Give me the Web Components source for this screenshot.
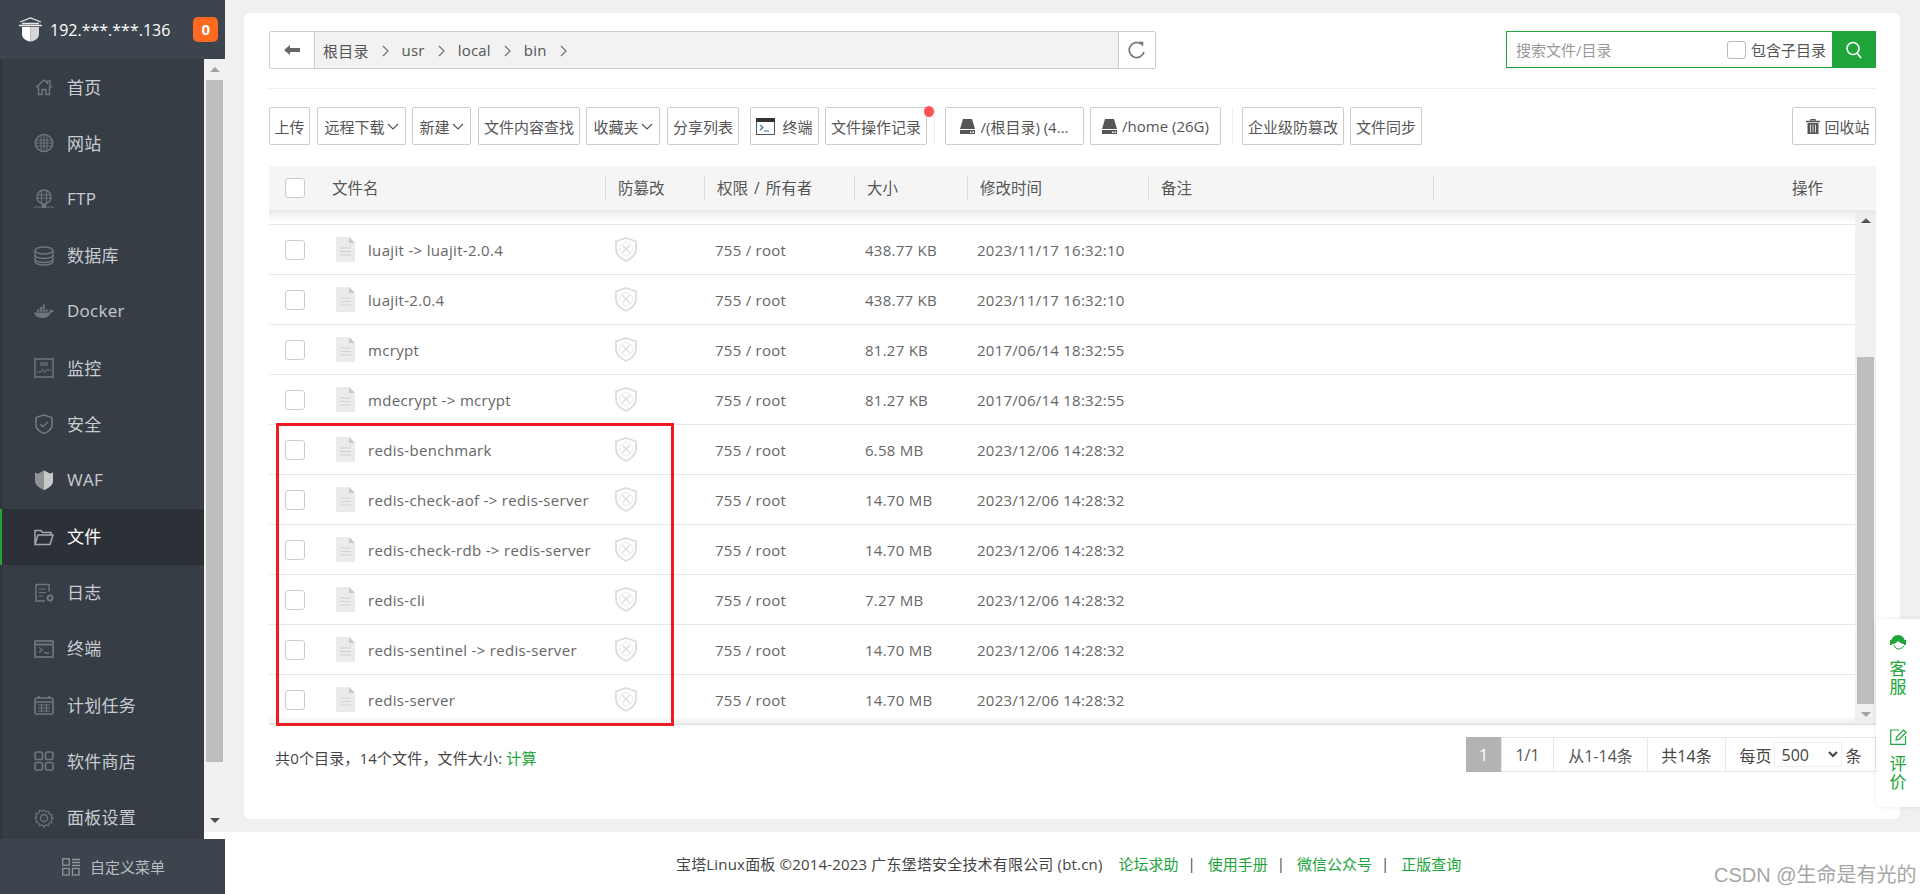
<!DOCTYPE html>
<html lang="zh">
<head>
<meta charset="utf-8">
<title>文件管理</title>
<style>
  html, body { margin: 0; height: 100%; overflow: hidden; }
  body { font-family: "Open Sans", "Noto Sans CJK SC", sans-serif; color: #555; background: #fff; }
</style>
</head>
<body>
<bt-app></bt-app>

<script>
const icons = {
  home: '<path d="M2 10.500 10 3l3.500 3.200V4h2.500v4.600l2 1.900M4.500 9v8.500h3.600v-5h3.800v5h3.600V9" fill="none" stroke="currentColor" stroke-width="1.500"/>',
  globe: '<circle cx="10" cy="10" r="8.600" fill="none" stroke="currentColor" stroke-width="1.500"/><path d="M1.500 7h17M1.500 10h17M1.500 13h17M7 2v16M10 1.500v17M13 2v16" stroke="currentColor" stroke-width="1" fill="none"/>',
  ftp: '<circle cx="10" cy="8" r="7" fill="none" stroke="currentColor" stroke-width="1.500"/><path d="M3.500 6h13M3.500 9h13M7.500 1.500v13M12.500 1.500v13M0 18h20" stroke="currentColor" stroke-width="1.200" fill="none"/><rect x="8" y="15" width="4" height="4" fill="currentColor"/>',
  db: '<path d="M1 4.500C1 2.500 5 1 10 1s9 1.500 9 3.500v11c0 2-4 3.500-9 3.500s-9-1.500-9-3.500z" fill="none" stroke="currentColor" stroke-width="1.500"/><path d="M1 4.500c0 2 4 3.500 9 3.500s9-1.500 9-3.500M1 9c0 2 4 3.500 9 3.500S19 11 19 9M1 13c0 2 4 3.500 9 3.500s9-1.500 9-3.500" fill="none" stroke="currentColor" stroke-width="1.500"/>',
  docker: '<path d="M0 10.500h15c.8-.8 1-2.300.6-3.500 1 .2 1.700.7 2 1.500.8-.3 1.600-.3 2.400 0-.6 1.500-1.700 2-3 2-1.300 3.500-4 5.500-8 5.500-4.500 0-8-1.500-9-5.500z" fill="currentColor"/><path d="M3 7.500h2.200v2.200H3zM5.800 7.500H8v2.200H5.800zM8.600 7.500h2.200v2.200H8.600zM11.400 7.500h2.200v2.200h-2.200zM5.800 5h2.200v2.200H5.800zM8.600 5h2.200v2.200H8.600zM8.600 2.500h2.200v2.200H8.600z" fill="currentColor"/>',
  monitor: '<rect x="1" y="1" width="18" height="18" fill="none" stroke="currentColor" stroke-width="1.500"/><path d="M3 14h4l1.500-3 2 4 1.500-3h5" fill="none" stroke="currentColor" stroke-width="1"/><rect x="6" y="4" width="8" height="4" fill="currentColor" opacity=".6"/>',
  safe: '<path d="M10 1 18 3.500V11c0 4-3.500 6.800-8 8.500C5.500 17.800 2 15 2 11V3.500z" fill="none" stroke="currentColor" stroke-width="1.700"/><path d="M6.300 10 9 12.700l4.800-4.700" fill="none" stroke="currentColor" stroke-width="1.500"/>',
  waf: '<path d="M1 2.500 4 3.700 7 2l3-1.500L13 2l3 1.700 3-1.200V11c0 4-4 7-9 9-5-2-9-5-9-9z" fill="#8f9396"/><path d="M10 .5 13 2l3 1.700 3-1.200V11c0 4-4 7-9 9z" fill="#c6c8ca"/>',
  folder: '<path d="M1 17.500V3.500h6l1.500 2H17v2.500M1 17.500 4 8h15l-3 9.500z" fill="none" stroke="currentColor" stroke-width="1.500"/>',
  log: '<path d="M15 9V2H2v16.500h9" fill="none" stroke="currentColor" stroke-width="1.500" transform="translate(0 -.5)"/><path d="M5 6h7M5 9.500h7M5 13h4" stroke="currentColor" stroke-width="1.200"/><circle cx="16" cy="15" r="2.500" fill="none" stroke="currentColor" stroke-width="2"/>',
  term: '<rect x="1" y="2" width="18" height="16" fill="none" stroke="currentColor" stroke-width="1.700"/><path d="M1 5.500h18" stroke="currentColor" stroke-width="2"/><path d="m5 8.500 3.500 2.500L5 13.500M10 14h5" fill="none" stroke="currentColor" stroke-width="1.300"/>',
  cal: '<rect x="1" y="3" width="18" height="16" rx="2" fill="none" stroke="currentColor" stroke-width="1.700"/><path d="M5 1v3M15 1v3M1 7h18" stroke="currentColor" stroke-width="1.700"/><path d="M4 10h12M4 13h12M4 16h12M7.500 9v8M12.500 9v8" stroke="currentColor" stroke-width="1.100"/>',
  apps: '<rect x="1" y="1" width="7.500" height="7.500" rx="2" fill="none" stroke="currentColor" stroke-width="1.700"/><rect x="11.500" y="1" width="7.500" height="7.500" rx="2" fill="none" stroke="currentColor" stroke-width="1.700"/><rect x="1" y="11.500" width="7.500" height="7.500" rx="2" fill="none" stroke="currentColor" stroke-width="1.700"/><rect x="11.500" y="11.500" width="7.500" height="7.500" rx="2" fill="none" stroke="currentColor" stroke-width="1.700"/>',
  gear: '<path d="m10 1 2 2.300 3-.6.9 2.900 2.900.9-.6 3L20 10l-1.800 1.500.6 3-2.900.9-.9 2.900-3-.6L10 20l-2-2.300-3 .6-.9-2.900-2.900-.9.6-3L0 10l1.800-1.500-.6-3 2.900-.9.9-2.900 3 .6z" fill="none" stroke="currentColor" stroke-width="1.300" transform="translate(1 1) scale(.9)"/><circle cx="10" cy="10" r="3.500" fill="none" stroke="currentColor" stroke-width="1.300"/>'
};

const menu = [
  ['home', '首页'], ['globe', '网站'], ['ftp', 'FTP'], ['db', '数据库'], ['docker', 'Docker'],
  ['monitor', '监控'], ['safe', '安全'], ['waf', 'WAF'], ['folder', '文件', true], ['log', '日志'],
  ['term', '终端'], ['cal', '计划任务'], ['apps', '软件商店'], ['gear', '面板设置']
];

class BtNavItem extends HTMLElement {
  constructor() {
    super();
    this.attachShadow({ mode: 'open' });
    this.shadowRoot.innerHTML = `
    <style>
      :host { display: flex; align-items: center; height: 56.2px; box-sizing: border-box; flex: none;
        border-left: 2px solid #2f353b; padding: 0 0 2px 32px; gap: 13px; font-size: 17px; letter-spacing: .25px; color: #c6ccd2; }
      :host([active]) { background: #2c3138; border-left-color: #20a53a; color: #fff; }
      .icon { width: 20px; height: 20px; color: #6f757a; display: flex; margin-top: 2px; }
      :host([active]) .icon { color: #a5a8ab; }
    </style>
    <span class="icon"><slot name="icon"></slot></span>
    <slot></slot>`;
  }
}
customElements.define('bt-nav-item', BtNavItem);

class BtSidebar extends HTMLElement {
  constructor() {
    super();
    this.attachShadow({ mode: 'open' });
    const items = menu.map(m => `<bt-nav-item ${m[2] ? 'active' : ''}><svg slot="icon" width="20" height="20" viewBox="0 0 20 20">${icons[m[0]]}</svg>${m[1]}</bt-nav-item>`).join('');
    this.shadowRoot.innerHTML = `
    <style>
      :host { display: flex; flex-direction: column; width: 225px; height: 894px; flex: none; background: #fff; }
      .top { height: 59px; background: #3c444d; display: flex; align-items: center; padding-left: 19px; flex: none; color: #fff; font-size: 16px; }
      .top svg { margin-right: 8px; }
      .badge { width: 25px; height: 25px; margin-left: 23px; background: #ff6a20; border-radius: 5px; text-align: center; font-weight: 700; font-size: 15px; line-height: 25px; }
      .mid { display: flex; height: 780px; flex: none; }
      .menu { width: 204px; background: #363d45; display: flex; flex-direction: column; overflow: hidden; flex: none; }
      .bar { width: 21px; height: 773px; background: #f1f1f1; display: flex; flex-direction: column; align-items: center; flex: none; }
      .arrow { height: 21px; display: flex; align-items: center; justify-content: center; flex: none; }
      .up { width: 0; height: 0; border: 5px solid transparent; border-top: 0; border-bottom: 5px solid #a3a3a3; }
      .down { width: 0; height: 0; border: 5px solid transparent; border-bottom: 0; border-top: 5px solid #505050; }
      .thumb { width: 17px; height: 682px; background: #bebebe; flex: none; }
      .gap { flex: 1; }
      .bottom { height: 55px; background: #3c444d; display: flex; align-items: center; padding-left: 62px; gap: 10px; color: #b6bcc2; font-size: 15px; flex: none; }
    </style>
    <div class="top">
      <svg width="23" height="25" viewBox="0 0 23 25">
        <path d="M1 5 11.500 1 22 5M0 8.500h23M3 6.500h17" fill="none" stroke="#e8e8e8" stroke-width="1.300"/>
        <path d="M3 10h8.500v14.500C7 24 3 21.500 3 17z" fill="#fff"/>
        <path d="M20 10h-8.500v14.500C16 24 20 21.500 20 17z" fill="#d5d7d9"/>
      </svg>
      <span>192.***.***.136</span>
      <span class="badge">0</span>
    </div>
    <div class="mid">
      <div class="menu">${items}</div>
      <div class="bar">
        <div class="arrow"><span class="up"></span></div>
        <div class="thumb"></div>
        <div class="gap"></div>
        <div class="arrow" style="height:23px"><span class="down"></span></div>
      </div>
    </div>
    <div class="bottom">
      <svg width="18" height="18" viewBox="0 0 18 18" fill="none" stroke="#8f959a" stroke-width="1.300">
        <rect x=".7" y=".7" width="6.500" height="6.500"/><rect x=".7" y="10.500" width="6.500" height="6.500"/><rect x="10.500" y="10.500" width="6.500" height="6.500"/>
        <path d="M10 1.500h8M10 4.500h8M10 7.500h8"/>
      </svg>
      <span>自定义菜单</span>
    </div>`;
  }
}
customElements.define('bt-sidebar', BtSidebar);

class BtPathbar extends HTMLElement {
  constructor() {
    super();
    this.attachShadow({ mode: 'open' });
    const crumbs = ['根目录', 'usr', 'local', 'bin'].map(c => `<span>${c}</span><svg class="sep" width="7" height="12" viewBox="0 0 7 12"><path d="m1 1 5 5-5 5" fill="none" stroke="#777" stroke-width="1.300"/></svg>`).join('');
    this.shadowRoot.innerHTML = `
    <style>
      :host { display: flex; justify-content: space-between; height: 38px; flex: none; }
      .path { width: 887px; display: flex; border: 1px solid #ccc; border-radius: 2px; box-sizing: border-box; }
      .btn { display: flex; align-items: center; justify-content: center; background: #fff; flex: none; }
      .back { width: 45px; border-right: 1px solid #ccc; box-sizing: border-box; }
      .refresh { width: 37px; border-left: 1px solid #ccc; box-sizing: border-box; }
      .crumbs { flex: 1; background: #f2f2f2; display: flex; align-items: center; padding-left: 8px; font-size: 15px; letter-spacing: .2px; color: #555; }
      .sep { margin: 2px 13px 0 13px; }
      .search { width: 370px; box-sizing: border-box; height: 37px; border: 1px solid #20a53a; display: flex; align-items: center; }
      .ph { font-size: 15px; color: #999; margin-left: 9px; flex: 1; }
      .cb { width: 19px; height: 18px; box-sizing: border-box; border: 1px solid #bbb; border-radius: 3px; margin-right: 5px; }
      .sub { font-size: 15px; color: #555; margin-right: 6px; }
      .go { width: 44px; height: 37px; margin: 0 -1px 0 0; background: #20a53a; display: flex; align-items: center; justify-content: center; flex: none; }
    </style>
    <div class="path">
      <div class="btn back"><svg width="16" height="10" viewBox="0 0 16 10"><path d="M6 0v3h10v4H6v3L0 5z" fill="#666"/></svg></div>
      <div class="crumbs">${crumbs}</div>
      <div class="btn refresh"><svg width="18" height="18" viewBox="0 0 18 18"><path d="M13.500 3.200A7.500 7.500 0 1 0 16 11" fill="none" stroke="#777" stroke-width="1.700"/><path d="M11 .5 15.500 1l-.6 4.800z" fill="#777"/></svg></div>
    </div>
    <div class="search">
      <span class="ph">搜索文件/目录</span>
      <span class="cb"></span>
      <span class="sub">包含子目录</span>
      <div class="go"><svg width="18" height="18" viewBox="0 0 18 18"><circle cx="8" cy="7.500" r="6" fill="none" stroke="#fff" stroke-width="1.700"/><path d="m12 12 4 5" stroke="#fff" stroke-width="1.700"/></svg></div>
    </div>`;
  }
}
customElements.define('bt-pathbar', BtPathbar);

class BtButton extends HTMLElement {
  constructor() {
    super();
    this.attachShadow({ mode: 'open' });
    this.shadowRoot.innerHTML = `
    <style>
      :host { display: flex; align-items: center; justify-content: center; gap: 6px; box-sizing: border-box; height: 38px; flex: none;
        border: 1px solid #ccc; border-radius: 2px; background: #fff; font-size: 15px; color: #555; white-space: nowrap; position: relative; }
      :host([dot])::after { content: ""; position: absolute; right: -8px; top: -2px; width: 10px; height: 11px; border-radius: 50%; background: #ff5252; }
    </style>
    <slot></slot>`;
  }
}
customElements.define('bt-button', BtButton);

class BtToolbar extends HTMLElement {
  constructor() {
    super();
    this.attachShadow({ mode: 'open' });
    const chev = '<svg width="12" height="7" viewBox="0 0 12 7" style="margin-left:-4px"><path d="m1 1 5 5 5-5" fill="none" stroke="#555" stroke-width="1.200"/></svg>';
    const disk = '<svg width="15" height="15" viewBox="0 0 15 15" style="margin-right:-1px"><path d="M3 0h9l3 10H0z" fill="#555"/><path d="M0 11h15v4H0z" fill="#555"/><path d="M10 12.500h1.500v1.500H10zM12.500 12.500H14v1.500h-1.500z" fill="#fff"/></svg>';
    this.shadowRoot.innerHTML = `
    <style>
      :host { display: flex; height: 38px; gap: 6px; flex: none; }
      .line { width: 1px; background: #eee; flex: none; }
      .right { margin-left: auto; }
    </style>
    <bt-button style="width:41px">上传</bt-button>
    <bt-button style="width:89px;margin-left:1px">远程下载${chev}</bt-button>
    <bt-button style="width:59px">新建${chev}</bt-button>
    <bt-button style="width:102px;margin-left:1px">文件内容查找</bt-button>
    <bt-button style="width:74px">收藏夹${chev}</bt-button>
    <bt-button style="width:72px;margin-left:1px">分享列表</bt-button>
    <bt-button style="width:69px;margin-left:5px;gap:7px">
      <svg width="19" height="17" viewBox="0 0 19 17"><rect x=".5" y=".5" width="18" height="16" fill="#fff" stroke="#555"/><path d="M0 0h19v4H0z" fill="#333"/><path d="m4 7 3 2.500L4 12M8 13h5" fill="none" stroke="#2a6f9e" stroke-width="1.100"/></svg>
      <span>终端</span>
    </bt-button>
    <bt-button dot style="width:102px">文件操作记录</bt-button>
    <div class="line" style="margin:0 4px 0 1px"></div>
    <bt-button style="width:139px">${disk}<span>/(根目录) (4...</span></bt-button>
    <bt-button style="width:131px">${disk}<span>/home (26G)</span></bt-button>
    <div class="line" style="margin:0 3px 0 5px"></div>
    <bt-button style="width:102px">企业级防篡改</bt-button>
    <bt-button style="width:72px">文件同步</bt-button>
    <bt-button class="right" style="width:84px;gap:4px;padding-left:8px">
      <svg width="14" height="15" viewBox="0 0 14 15"><path d="M0 2.500h14M5 2.500V.7h4v1.800" fill="none" stroke="#555" stroke-width="1.300"/><path d="M1.500 4h11v11h-11z" fill="#555"/><path d="M4.500 5.500v8M7 5.500v8M9.500 5.500v8" stroke="#fff" stroke-width=".8"/></svg>
      <span>回收站</span>
    </bt-button>`;
  }
}
customElements.define('bt-toolbar', BtToolbar);

class FileRow extends HTMLElement {
  constructor() {
    super();
    this.attachShadow({ mode: 'open' });
  }
  connectedCallback() {
    this.shadowRoot.innerHTML = `
    <style>
      :host { display: grid; grid-template-columns: 336px 99px 150px 113px 1fr; align-items: center; height: 50px; box-sizing: border-box;
        border-bottom: 1px solid #e8e8e8; font-size: 15px; letter-spacing: .25px; color: #666; flex: none; }
      .name { display: flex; align-items: center; padding-left: 16px; letter-spacing: .32px; }
      .cb { width: 20px; height: 20px; box-sizing: border-box; border: 1px solid #ccc; border-radius: 3px; margin-right: 31px; flex: none; }
      .file { margin-right: 13px; flex: none; }
      .guard { padding-left: 10px; display: flex; }
      .perm { padding-left: 11px; }
      .size { padding-left: 11px; }
      .time { padding-left: 10px; }
    </style>
    <div class="name">
      <span class="cb"></span>
      <svg class="file" width="19" height="25" viewBox="0 0 19 25"><path d="M1 0h12l6 6v18a1 1 0 0 1-1 1H1a1 1 0 0 1-1-1V1a1 1 0 0 1 1-1z" fill="#ebebeb"/><path d="M13 0l6 6h-6z" fill="#c9c9c9"/><path d="M4 11h11M4 14.500h11M4 18h11" stroke="#d2d2d2" stroke-width="1.100"/></svg>
      <span>${this.getAttribute('name')}</span>
    </div>
    <div class="guard"><svg width="22" height="25" viewBox="0 0 22 25"><path d="M11 1 21 4.500V12c0 5.500-4.500 9.500-10 12C5.500 21.500 1 17.500 1 12V4.500z" fill="none" stroke="#dcdcdc" stroke-width="1.800"/><path d="m7 8 8 8M15 8l-8 8" stroke="#dcdcdc" stroke-width="1.100"/><circle cx="11" cy="12" r="6.500" fill="none" stroke="#e6e6e6" stroke-width=".8"/></svg></div>
    <div class="perm">${this.getAttribute('perm')}</div>
    <div class="size">${this.getAttribute('size')}</div>
    <div class="time">${this.getAttribute('time')}</div>`;
  }
}
customElements.define('file-row', FileRow);

const files = [
  ['luajit -> luajit-2.0.4', '438.77 KB', '2023/11/17 16:32:10'],
  ['luajit-2.0.4', '438.77 KB', '2023/11/17 16:32:10'],
  ['mcrypt', '81.27 KB', '2017/06/14 18:32:55'],
  ['mdecrypt -> mcrypt', '81.27 KB', '2017/06/14 18:32:55'],
  ['redis-benchmark', '6.58 MB', '2023/12/06 14:28:32'],
  ['redis-check-aof -> redis-server', '14.70 MB', '2023/12/06 14:28:32'],
  ['redis-check-rdb -> redis-server', '14.70 MB', '2023/12/06 14:28:32'],
  ['redis-cli', '7.27 MB', '2023/12/06 14:28:32'],
  ['redis-sentinel -> redis-server', '14.70 MB', '2023/12/06 14:28:32'],
  ['redis-server', '14.70 MB', '2023/12/06 14:28:32']
];

class FileTable extends HTMLElement {
  constructor() {
    super();
    this.attachShadow({ mode: 'open' });
    const rows = files.map(f => `<file-row name="${f[0].replace('>', '&gt;')}" perm="755 / root" size="${f[1]}" time="${f[2]}"></file-row>`).join('');
    this.shadowRoot.innerHTML = `
    <style>
      :host { display: block; position: relative; flex: none; }
      .head { height: 44px; background: #f5f5f5; display: grid; grid-template-columns: 336px 99px 150px 113px 181px 285px 1fr; align-items: center; font-size: 15.500px; color: #555; }
      .head > div { height: 25px; line-height: 25px; padding-left: 12px; border-left: 1px solid #ddd; box-sizing: border-box; }
      .head > div:first-child { display: flex; align-items: center; gap: 27px; padding-left: 16px; border: 0; }
      .head .cb { width: 20px; height: 20px; box-sizing: border-box; border: 1px solid #ccc; border-radius: 3px; background: #fff; }
      .head > div:last-child { text-align: right; padding-right: 53px; }
      .head .own { word-spacing: 2px; }
      .list { height: 514px; display: flex; position: relative; border-bottom: 1px solid #ddd; box-sizing: content-box; }
      .rows { flex: 1; display: flex; flex-direction: column; overflow: hidden; }
      .stub { height: 15px; border-bottom: 1px solid #e8e8e8; box-sizing: border-box; flex: none; }
      .bar { width: 21px; background: #f1f1f1; display: flex; flex-direction: column; align-items: center; flex: none; }
      .arrow { height: 21px; display: flex; align-items: center; justify-content: center; flex: none; }
      .up { width: 0; height: 0; border: 5px solid transparent; border-top: 0; border-bottom: 5px solid #505050; }
      .down { width: 0; height: 0; border: 5px solid transparent; border-bottom: 0; border-top: 5px solid #a3a3a3; }
      .thumb { width: 17px; height: 347px; background: #bebebe; margin-top: 126px; flex: none; }
      .shade { position: absolute; left: 0; right: 0; height: 12px; pointer-events: none; }
      .shade.t { top: 0; background: linear-gradient(#e9e9e9, rgba(255,255,255,0)); }
      .shade.b { bottom: 0; height: 8px; background: linear-gradient(rgba(255,255,255,0), #ededed); }
      .mark { position: absolute; left: 7px; top: 257px; width: 398px; height: 303px; box-sizing: border-box; border: 3px solid #ed1c24; }
    </style>
    <div class="head">
      <div><span class="cb"></span><span>文件名</span></div>
      <div>防篡改</div><div class="own">权限 / 所有者</div><div>大小</div><div>修改时间</div><div>备注</div><div>操作</div>
    </div>
    <div class="list">
      <div class="rows"><div class="stub"></div>${rows}</div>
      <div class="bar">
        <div class="arrow"><span class="up"></span></div>
        <div class="thumb"></div>
        <div style="flex:1"></div>
        <div class="arrow"><span class="down"></span></div>
      </div>
      <div class="shade t"></div>
      <div class="shade b"></div>
    </div>
    <div class="mark"></div>`;
  }
}
customElements.define('file-table', FileTable);

class BtPager extends HTMLElement {
  constructor() {
    super();
    this.attachShadow({ mode: 'open' });
    this.shadowRoot.innerHTML = `
    <style>
      :host { display: flex; justify-content: space-between; align-items: flex-start; margin-top: 12px; flex: none; }
      .sum { margin: 11px 0 0 6px; font-size: 15px; letter-spacing: .15px; line-height: 20px; color: #444; }
      .sum b { font-weight: 400; color: #20a53a; }
      .pages { display: flex; height: 35px; font-size: 16px; color: #555; border: solid #e8e8e8; border-width: 1px 1px 1px 0; box-sizing: border-box; }
      .pages > div { display: flex; align-items: center; justify-content: center; border-left: 1px solid #e8e8e8; box-sizing: border-box; }
      .pages .cur { width: 35px; margin: -1px 0; height: 35px; background: #b3b3b3; color: #fff; border: 0; }
      select { width: 68px; height: 25px; margin: 0 4px 0 2px; font: 16px "Open Sans", sans-serif; color: #444; background: #fff; border: 1px solid #eee; border-radius: 2px; padding-left: 3px; }
    </style>
    <div class="sum">共0个目录，14个文件，文件大小: <b>计算</b></div>
    <div class="pages">
      <div class="cur">1</div>
      <div style="width:52px">1/1</div>
      <div style="width:94px">从1-14条</div>
      <div style="width:78px;color:#444">共14条</div>
      <div style="width:150px;color:#444">每页<select><option>500</option></select>条</div>
    </div>`;
  }
}
customElements.define('bt-pager', BtPager);

class BtFooter extends HTMLElement {
  constructor() {
    super();
    this.attachShadow({ mode: 'open' });
    this.shadowRoot.innerHTML = `
    <style>
      :host { display: flex; align-items: center; height: 62px; padding-left: 451px; font-size: 15px; color: #444; flex: none; background: #fff; white-space: nowrap; }
      span { letter-spacing: .18px; }
      a { color: #20a53a; text-decoration: none; }
      i { font-style: normal; margin: 0 12px 0 9px; }
      a:first-of-type { margin-left: 16px; }
    </style>
    <span>宝塔Linux面板 ©2014-2023 广东堡塔安全技术有限公司 (bt.cn)</span>
    <a>论坛求助</a><i>|</i><a>使用手册</a><i>|</i><a>微信公众号</a><i>|</i><a>正版查询</a>`;
  }
}
customElements.define('bt-footer', BtFooter);

class FloatPanel extends HTMLElement {
  constructor() {
    super();
    this.attachShadow({ mode: 'open' });
    this.shadowRoot.innerHTML = `
    <style>
      :host { position: absolute; left: 1876px; top: 619px; width: 44px; height: 188px; background: #fff; border-radius: 6px 0 0 6px;
        box-shadow: 0 0 6px rgba(0,0,0,.08); color: #20a53a; font-size: 17px; line-height: 18px; display: flex; flex-direction: column; align-items: center; }
      .t { width: 17px; text-align: center; }
      svg { display: block; }
    </style>
    <svg style="margin-top:15px" width="18" height="17" viewBox="0 0 18 17"><path d="M2 8a7 7 0 0 1 14 0c0 1-.5 2-1 2-2 0-4-1-6-3-1 1.500-3 3-5 3-1 0-2-1-2-2z" fill="#20a53a"/><path d="M1 6h2v5H1zM15 6h2v5h-2z" fill="#20a53a"/><path d="M5 11c1 3 3 4 4 4 2 0 4-1 6-3" fill="none" stroke="#20a53a" stroke-width="1"/></svg>
    <div class="t" style="margin-top:9px">客服</div>
    <svg style="margin-top:33px" width="17" height="16" viewBox="0 0 17 16"><path d="M9 1H.7v14.300h14.800V7" fill="none" stroke="#20a53a" stroke-width="1.200"/><path d="m6 11 .6-3L13.500 1 16 3.500 9 10.400z" fill="none" stroke="#20a53a" stroke-width="1.200"/></svg>
    <div class="t" style="margin-top:10px">评价</div>`;
  }
}
customElements.define('float-panel', FloatPanel);

class BtCard extends HTMLElement {
  constructor() {
    super();
    this.attachShadow({ mode: 'open' });
    this.shadowRoot.innerHTML = `
    <style>
      :host { display: flex; flex-direction: column; height: 806px; box-sizing: border-box; background: #fff; border-radius: 6px; padding: 18px 24px 0 25px; }
      hr { height: 1px; border: 0; background: #eee; margin: 19px 0 18px; flex: none; }
      bt-toolbar { margin-bottom: 21px; }
    </style>
    <bt-pathbar></bt-pathbar>
    <hr>
    <bt-toolbar></bt-toolbar>
    <file-table></file-table>
    <bt-pager></bt-pager>`;
  }
}
customElements.define('bt-card', BtCard);

class BtApp extends HTMLElement {
  constructor() {
    super();
    this.attachShadow({ mode: 'open' });
    this.shadowRoot.innerHTML = `
    <style>
      :host { display: flex; width: 1920px; height: 894px; position: relative; overflow: hidden; }
      main { flex: 1; display: flex; flex-direction: column; min-width: 0; }
      .content { height: 832px; box-sizing: border-box; background: #f0f0f0; padding: 13px 20px 0 19px; flex: none; }
      .mark { position: absolute; left: 1714px; top: 861px; font: 20px/28px "Liberation Sans", "Noto Sans CJK SC", sans-serif; color: #a6a6a6; white-space: nowrap; }
    </style>
    <bt-sidebar></bt-sidebar>
    <main>
      <div class="content"><bt-card></bt-card></div>
      <bt-footer></bt-footer>
    </main>
    <float-panel></float-panel>
    <div class="mark">CSDN @生命是有光的</div>`;
  }
}
customElements.define('bt-app', BtApp);
</script>
</body>
</html>
